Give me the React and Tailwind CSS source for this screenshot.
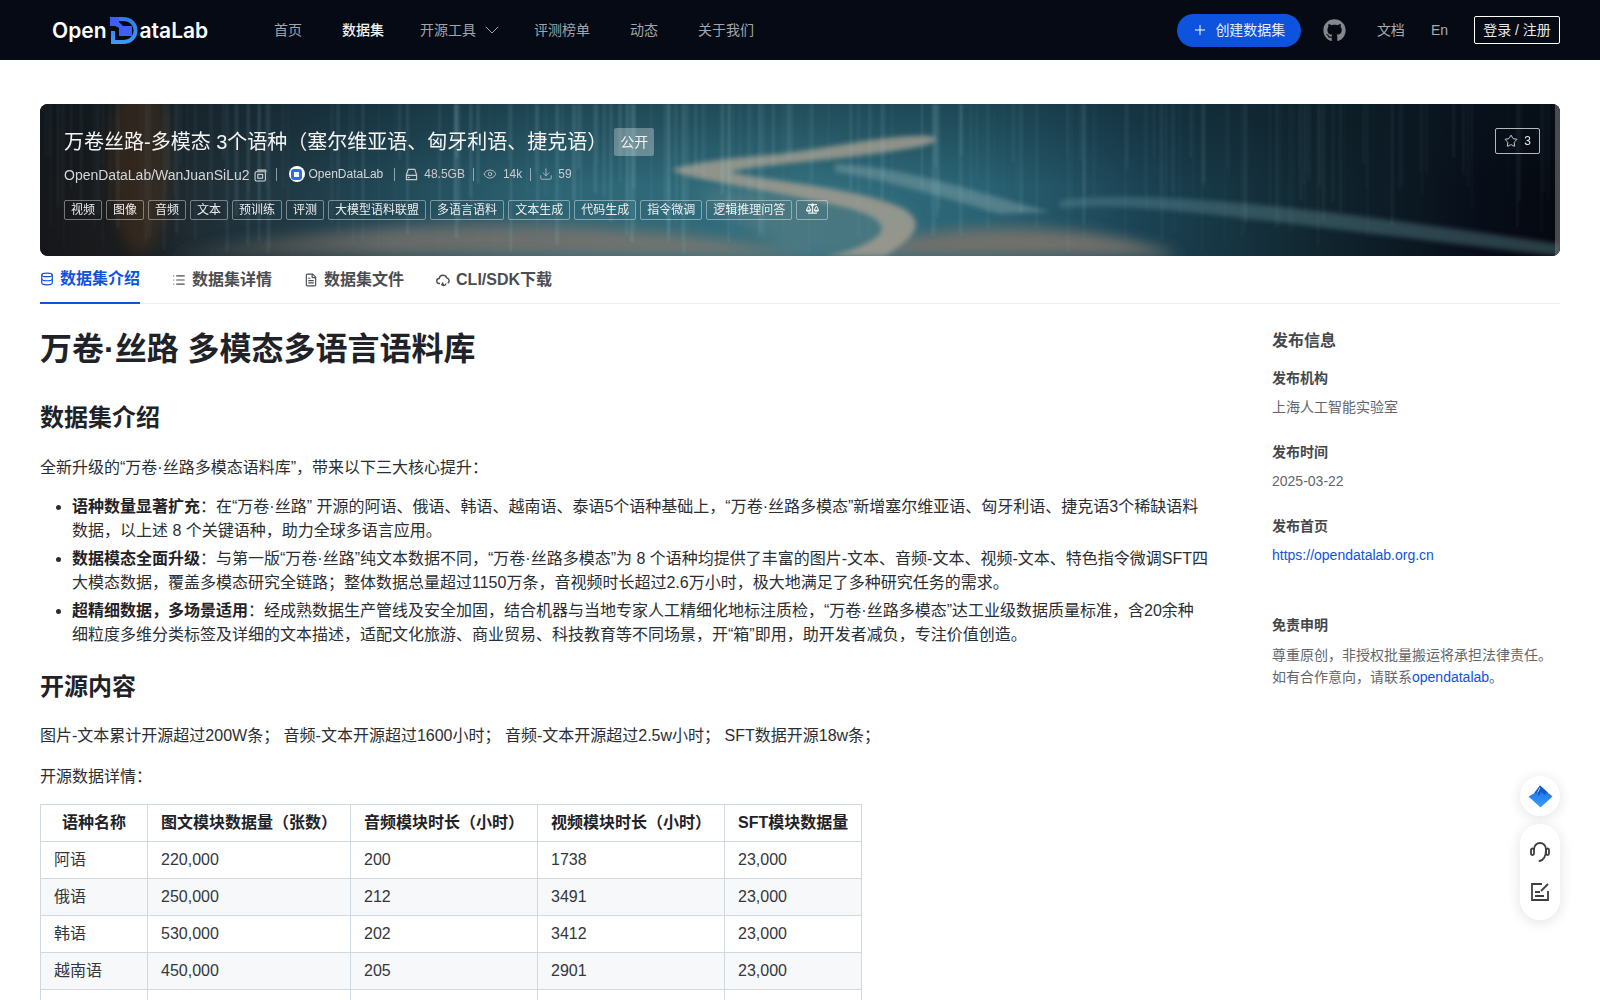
import React from "react";
import { ChevronDown, Plus, Star, Eye, Download, Database, List, FileText } from "lucide-react";
import { FaGithub, FaBalanceScale } from "react-icons/fa";

const FONT = "font-['Liberation_Sans','Noto_Sans_CJK_SC',sans-serif]";

function rand(seed) {
  const x = Math.sin(seed * 127.1) * 43758.5453;
  return x - Math.floor(x);
}

const stripes = Array.from({ length: 240 }, (_, i) => {
  const x = rand(i + 1) * 1520;
  const h = 50 + rand(i + 50) * 100;
  const w = 0.8 + rand(i + 90) * 3;
  const center = Math.exp(-Math.pow((x - 520) / 380, 2));
  const o = 0.03 + rand(i + 130) * 0.09 * (0.35 + center);
  return { x, h, w, o };
});

function BannerArt() {
  return (
    <svg className="absolute inset-0 w-full h-full" viewBox="0 0 1520 152" preserveAspectRatio="none" aria-hidden="true">
      <defs>
        <linearGradient id="base" x1="0" x2="1" y1="0" y2="0">
          <stop offset="0" stopColor="#15171a" />
          <stop offset="0.06" stopColor="#1b1d1f" />
          <stop offset="0.1" stopColor="#1f2c33" />
          <stop offset="0.22" stopColor="#214654" />
          <stop offset="0.34" stopColor="#2d6575" />
          <stop offset="0.5" stopColor="#33707f" />
          <stop offset="0.62" stopColor="#2a6374" />
          <stop offset="0.72" stopColor="#1c4455" />
          <stop offset="0.84" stopColor="#11262f" />
          <stop offset="0.95" stopColor="#070d18" />
          <stop offset="1" stopColor="#05080f" />
        </linearGradient>
        <linearGradient id="fadeUp" x1="0" x2="0" y1="0" y2="1">
          <stop offset="0" stopColor="#0a1720" stopOpacity="0.4" />
          <stop offset="0.55" stopColor="#0a1720" stopOpacity="0" />
        </linearGradient>
        <linearGradient id="mound" x1="0" x2="1" y1="0" y2="0">
          <stop offset="0" stopColor="#2f3537" />
          <stop offset="0.35" stopColor="#666b69" />
          <stop offset="1" stopColor="#787a76" />
        </linearGradient>
        <filter id="b1"><feGaussianBlur stdDeviation="0.8" /></filter>
        <filter id="b3"><feGaussianBlur stdDeviation="2.500" /></filter>
        <filter id="b6"><feGaussianBlur stdDeviation="7" /></filter>
      </defs>
      <rect width="1520" height="152" fill="url(#base)" />
      <rect width="1520" height="152" fill="url(#fadeUp)" />
      <ellipse cx="100" cy="60" rx="30" ry="90" fill="#54371f" opacity="0.4" filter="url(#b6)" />
      <g filter="url(#b6)">
        <path d="M130 152 C 250 124 430 114 560 124 C 660 130 735 144 770 152 Z" fill="url(#mound)" />
        <path d="M815 152 C 850 128 960 118 1040 128 C 1090 134 1120 144 1140 152 Z" fill="#72716c" />
        <path d="M660 90 C 740 80 840 90 870 110 C 880 130 860 150 850 152 L 760 152 C 720 130 680 110 660 90 Z" fill="#5d7f85" opacity="0.55" />
      </g>
      <g filter="url(#b3)">
        <path d="M890 32 C 850 30 790 44 740 50 C 695 54 650 58 632 66 C 650 76 720 84 790 100 C 830 108 850 118 838 132 C 820 146 795 150 785 152 L 845 152 C 870 136 890 120 862 104 C 820 84 720 76 690 68 C 720 60 800 56 860 46 C 890 42 905 36 890 32 Z" fill="#a09c8f" opacity="0.85" />
        <path d="M795 60 C 860 62 930 86 1010 108 L 960 110 C 900 92 840 74 795 68 Z" fill="#7fa0a6" opacity="0.5" />
        <path d="M1020 104 C 1100 96 1240 120 1520 152 L 1520 140 C 1300 108 1120 84 1020 96 Z" fill="#5f8b93" opacity="0.4" />
      </g>
      <g filter="url(#b1)">
        {stripes.map((s, i) => (
          <rect key={i} x={s.x} y={0} width={s.w} height={s.h} fill="#a8d4de" opacity={s.o} />
        ))}
      </g>
      <rect x="1515" width="5" height="152" fill="#777777" opacity="0.6" />
    </svg>
  );
}

function Logo() {
  return (
    <div className="flex items-center text-white font-['Inter',sans-serif] font-semibold text-[21px] leading-none w-[156px] ml-[52px]">
      <span>Open</span>
      <svg width="28" height="27" viewBox="0 0 28 27" className="ml-[3px] mr-[2px] shrink-0">
        <defs>
          <linearGradient id="logoG" x1="0" x2="0" y1="0" y2="1">
            <stop offset="0" stopColor="#2f7bf0" />
            <stop offset="1" stopColor="#3a9cf5" />
          </linearGradient>
        </defs>
        <path d="M9 0h4c9 0 14.500 6 14.500 13.500S22 27 13 27H1V14h4v9h8c6.500 0 10.500-4 10.500-9.500S19.500 4 13 4H9z" fill="url(#logoG)" />
        <path d="M0 0h9v5l4 4h9v10H9v-8L5 9H0z" fill="#3d5ff5" />
      </svg>
      <span>ataLab</span>
    </div>
  );
}

function Header() {
  const item = "text-[14px] text-[#a3a5a9]";
  return (
    <header className="h-[60px] bg-[#050a14] flex items-center shrink-0">
      <Logo />
      <nav className="flex items-center ml-[66px]">
        <span className={item}>首页</span>
        <span className="text-[14px] text-[#f2f2f2] font-medium ml-[40px]">数据集</span>
        <span className={`${item} ml-[36px]`}>开源工具</span>
        <ChevronDown size={24} strokeWidth={1} className="text-[#a3a5a9] ml-[4px]" />
        <span className={`${item} ml-[30px]`}>评测榜单</span>
        <span className={`${item} ml-[40px]`}>动态</span>
        <span className={`${item} ml-[40px]`}>关于我们</span>
      </nav>
      <div className="flex items-center ml-auto mr-[40px]">
        <button className="h-[33px] w-[124px] rounded-full bg-[#0d53de] text-[#e8eefc] text-[14px] flex items-center justify-center gap-[7px]">
          <Plus size={16} strokeWidth={1.5} className="text-white" />
          创建数据集
        </button>
        <FaGithub size={23} className="text-[#85878b] ml-[22px]" />
        <span className="text-[14px] text-[#a9abae] ml-[31px]">文档</span>
        <span className="text-[14px] text-[#a9abae] ml-[26px]">En</span>
        <button className="ml-[26px] h-[28px] w-[86px] border border-white rounded-[2px] text-[14px] text-[#e8e8e8]">登录 / 注册</button>
      </div>
    </header>
  );
}

const TAGS = ["视频", "图像", "音频", "文本", "预训练", "评测", "大模型语料联盟", "多语言语料", "文本生成", "代码生成", "指令微调", "逻辑推理问答"];

function Divider({ className }) {
  return <span className={`block w-px h-[13px] bg-white/50 ${className}`} />;
}

function Banner() {
  return (
    <section className="relative mt-[44px] mx-[40px] h-[152px] rounded-[8px] overflow-hidden bg-[#15171a] shrink-0">
      <BannerArt />
      <div className="relative pl-[24px] pr-[20px] pt-[24px] text-white">
        <div className="flex items-start h-[28px]">
          <h2 className="text-[20px] leading-[28px] text-[#f4f4f4]">万卷丝路-多模态 3个语种（塞尔维亚语、匈牙利语、捷克语）</h2>
          <span className="ml-[7px] h-[28px] w-[40px] rounded-[2px] bg-white/30 text-[14px] text-[#f2f2f2] flex items-center justify-center">公开</span>
          <button className="ml-auto h-[26px] w-[45px] border border-white/70 rounded-[2px] text-[12px] text-[#e8e8e8] flex items-center justify-center gap-[6px]">
            <Star size={14} strokeWidth={1.5} />3
          </button>
        </div>
        <div className="flex items-center mt-[9px] h-[20px]">
          <span className="text-[14px] text-[#d4d6d8]">OpenDataLab/WanJuanSiLu2</span>
          <svg width="13" height="13" viewBox="0 0 12 12" fill="none" stroke="#d4d6d8" strokeWidth="1" className="ml-[4px]">
            <rect x="1" y="2.500" width="9.500" height="8.500" rx="1" />
            <path d="M3 1h7.500A.5.5 0 0 1 11 1.500V3" />
            <rect x="3.500" y="5" width="4.500" height="3.500" />
          </svg>
          <Divider className="ml-[9px] -mt-[2px]" />
          <span className="ml-[12px] -mt-[2px] w-[16px] h-[16px] rounded-full bg-white flex items-center justify-center">
            <span className="w-[11px] h-[11px] rounded-[3px] bg-[#2f6bf2] flex items-center justify-center">
              <span className="w-[5px] h-[5px] bg-white" />
            </span>
          </span>
          <span className="ml-[4px] -mt-[2px] text-[12px] text-[#d4d6d8]">OpenDataLab</span>
          <Divider className="ml-[11px] -mt-[2px]" />
          <svg width="13" height="13" viewBox="0 0 14 14" fill="none" stroke="#c9cbce" strokeWidth="1.200" className="ml-[10px] -mt-[2px]">
            <path d="M3.500 1.500h7l2 6v5h-11v-5z" />
            <path d="M1.500 8h11M3 10.300h2" />
          </svg>
          <span className="ml-[6px] -mt-[2px] text-[12px] text-[#c9cbce]">48.5GB</span>
          <Divider className="ml-[8px] -mt-[2px]" />
          <Eye size={14} strokeWidth={1.400} className="text-[#c9cbce] ml-[9px] -mt-[2px]" />
          <span className="ml-[6px] -mt-[2px] text-[12px] text-[#c9cbce]">14k</span>
          <Divider className="ml-[8px] -mt-[2px]" />
          <Download size={14} strokeWidth={1.300} className="text-[#c9cbce] ml-[8px] -mt-[2px]" />
          <span className="ml-[5px] -mt-[2px] text-[12px] text-[#c9cbce]">59</span>
        </div>
        <div className="flex items-center gap-[4px] mt-[15px]">
          {TAGS.map((t) => (
            <span key={t} className="h-[20px] px-[6px] border border-white/40 rounded-[2px] text-[12px] leading-[18px] text-[#eeeeee]">{t}</span>
          ))}
          <span className="h-[20px] w-[32px] border border-white/40 rounded-[2px] flex justify-center pt-[1px] text-[#eeeeee]">
            <FaBalanceScale size={13} />
          </span>
        </div>
      </div>
    </section>
  );
}

function Tabs() {
  const off = "flex items-center gap-[6px] h-[48px] text-[#4a4d52]";
  return (
    <div className="mx-[40px] h-[48px] border-b border-[#eeeeee] flex gap-[32px] text-[16px] font-bold shrink-0">
      <div className="flex items-center gap-[6px] h-[48px] text-[#0d53de] border-b-2 border-[#0d53de]">
        <Database size={14} strokeWidth={2} />数据集介绍
      </div>
      <div className={off}><List size={14} strokeWidth={2} />数据集详情</div>
      <div className={off}><FileText size={14} strokeWidth={2} />数据集文件</div>
      <div className={`${off} gap-[5px]`}>
        <svg width="14" height="14" viewBox="0 0 14 14" fill="none" stroke="#4a4d52" strokeWidth="1.400">
          <path d="M4 10.500H3.500a2.500 2.500 0 0 1-.4-5A4 4 0 0 1 10.800 5a2.800 2.800 0 0 1 .9 5.200" />
          <path d="M6 11.500a2.200 2.200 0 0 0 4-1" />
          <path d="M7 9.500l-1 2h2" />
        </svg>
        CLI/SDK下载
      </div>
    </div>
  );
}

const ROWS = [
  ["阿语", "220,000", "200", "1738", "23,000"],
  ["俄语", "250,000", "212", "3491", "23,000"],
  ["韩语", "530,000", "202", "3412", "23,000"],
  ["越南语", "450,000", "205", "2901", "23,000"],
  ["\u00a0", "", "", "", ""],
];

function DataTable() {
  const th = "border border-[#d1d9e0] px-[13px] h-[37px] font-bold text-[#1f2328] whitespace-nowrap";
  const td = "border border-[#d1d9e0] px-[13px] h-[37px] text-[#33373d]";
  return (
    <table className="mt-[15px] border-collapse text-[16px] leading-[24px] w-[821px] table-fixed">
      <colgroup>
        <col className="w-[107px]" />
        <col className="w-[203px]" />
        <col className="w-[187px]" />
        <col className="w-[187px]" />
        <col className="w-[137px]" />
      </colgroup>
      <thead>
        <tr>
          <th className={`${th} text-center`}>语种名称</th>
          <th className={`${th} text-left`}>图文模块数据量（张数）</th>
          <th className={`${th} text-left`}>音频模块时长（小时）</th>
          <th className={`${th} text-left`}>视频模块时长（小时）</th>
          <th className={`${th} text-left`}>SFT模块数据量</th>
        </tr>
      </thead>
      <tbody>
        {ROWS.map((r, i) => (
          <tr key={i} className={i % 2 === 1 ? "bg-[#f6f8fa]" : "bg-white"}>
            {r.map((c, j) => (
              <td key={j} className={td}>{c}</td>
            ))}
          </tr>
        ))}
      </tbody>
    </table>
  );
}

function Article() {
  const li = "leading-[24px]";
  return (
    <article className="w-[1168px] shrink-0 text-[16px] leading-[24px] text-[#2a2e33]">
      <h1 className="mt-[25px] text-[32px] leading-[40px] font-bold text-[#1f2328]">万卷·丝路 多模态多语言语料库</h1>
      <h2 className="mt-[33px] text-[24px] leading-[32px] font-bold text-[#1f2328]">数据集介绍</h2>
      <p className="mt-[22px]">全新升级的“万卷·丝路多模态语料库”，带来以下三大核心提升：</p>
      <ul className="mt-[15px] pl-[32px] list-disc flex flex-col gap-[4px]">
        <li className={li}><strong className="font-bold text-[#1f2328]">语种数量显著扩充</strong>：在“万卷·丝路” 开源的阿语、俄语、韩语、越南语、泰语5个语种基础上，“万卷·丝路多模态”新增塞尔维亚语、匈牙利语、捷克语3个稀缺语料数据，以上述 8 个关键语种，助力全球多语言应用。</li>
        <li className={li}><strong className="font-bold text-[#1f2328]">数据模态全面升级</strong>：与第一版“万卷·丝路”纯文本数据不同，“万卷·丝路多模态”为 8 个语种均提供了丰富的图片-文本、音频-文本、视频-文本、特色指令微调SFT四大模态数据，覆盖多模态研究全链路；整体数据总量超过1150万条，音视频时长超过2.6万小时，极大地满足了多种研究任务的需求。</li>
        <li className={li}><strong className="font-bold text-[#1f2328]">超精细数据，多场景适用</strong>：经成熟数据生产管线及安全加固，结合机器与当地专家人工精细化地标注质检，“万卷·丝路多模态”达工业级数据质量标准，含20余种细粒度多维分类标签及详细的文本描述，适配文化旅游、商业贸易、科技教育等不同场景，开“箱”即用，助开发者减负，专注价值创造。</li>
      </ul>
      <h2 className="mt-[24px] text-[24px] leading-[32px] font-bold text-[#1f2328]">开源内容</h2>
      <p className="mt-[21px]">图片-文本累计开源超过200W条； 音频-文本开源超过1600小时； 音频-文本开源超过2.5w小时； SFT数据开源18w条；</p>
      <p className="mt-[17px]">开源数据详情：</p>
      <DataTable />
    </article>
  );
}

function Sidebar() {
  const label = "text-[14px] leading-[20px] font-bold text-[#45484d]";
  const value = "mt-[9px] text-[14px] leading-[20px]";
  return (
    <aside className="ml-[64px] w-[288px] shrink-0 pt-[25px]">
      <h3 className="text-[16px] leading-[24px] font-bold text-[#45484d]">发布信息</h3>
      <div className={`${label} mt-[15px]`}>发布机构</div>
      <div className={`${value} text-[#63666b]`}>上海人工智能实验室</div>
      <div className={`${label} mt-[25px]`}>发布时间</div>
      <div className={`${value} text-[#63666b]`}>2025-03-22</div>
      <div className={`${label} mt-[25px]`}>发布首页</div>
      <div className={`${value} text-[#0d53de]`}>https://opendatalab.org.cn</div>
      <div className={`${label} mt-[50px]`}>免责申明</div>
      <p className="mt-[9px] text-[14px] leading-[22px] text-[#63666b]">
        尊重原创，非授权批量搬运将承担法律责任。<br />如有合作意向，请联系<span className="text-[#0d53de]">opendatalab</span>。
      </p>
    </aside>
  );
}

function FloatingTools() {
  return (
    <div className="fixed left-[1520px] top-[776px] w-[40px] flex flex-col gap-[8px]">
      <div className="w-[40px] h-[40px] rounded-full bg-white shadow-[0_2px_14px_rgba(0,0,0,0.12)] flex items-center justify-center">
        <svg width="25" height="23" viewBox="0 0 25 23">
          <defs>
            <linearGradient id="mtn" x1="0" x2="0" y1="0" y2="1">
              <stop offset="0" stopColor="#1668e0" />
              <stop offset="1" stopColor="#3a9dfb" />
            </linearGradient>
          </defs>
          <path d="M12 0.500 L24.500 11.500 L12.500 22.500 L0.500 11.500 L6 8.500 Z" fill="url(#mtn)" />
          <path d="M12 0.500 L6 8.500 L9.500 7.500 L11 11 L13 6.500 L17 10 L19 7 Z" fill="#1259cc" />
          <path d="M15 2.500 C 18 3 20 5.500 21 8.500" stroke="#ffffff" strokeWidth="0.700" fill="none" />
          <path d="M12 2.500 L9.500 7.500" stroke="#ffffff" strokeWidth="0.700" fill="none" />
        </svg>
      </div>
      <div className="w-[40px] h-[96px] rounded-full bg-white shadow-[0_2px_14px_rgba(0,0,0,0.12)] flex flex-col items-center justify-between pt-[18px] pb-[19px]">
        <svg width="20" height="20" viewBox="0 0 20 20" fill="none" stroke="#3d3f44" strokeWidth="1.800" strokeLinecap="round">
          <path d="M4 7.500C4 3.500 6.800 1 10 1s6 2.500 6 6.500c0 6-1.500 10.500-6.500 11.500" />
          <rect x="1" y="6.500" width="3" height="6.500" rx="1.500" />
          <rect x="16" y="6.500" width="3" height="6.500" rx="1.500" />
        </svg>
        <svg width="18" height="18" viewBox="0 0 18 18" fill="none" stroke="#3d3f44" strokeWidth="1.800">
          <path d="M11 1H1v16h16V8" />
          <path d="M10 8l7-7" />
          <path d="M4 9h5M4 13h9" />
        </svg>
      </div>
    </div>
  );
}

export default function App() {
  return (
    <div className={`${FONT} h-[1000px] overflow-hidden bg-white flex flex-col`}>
      <Header />
      <Banner />
      <Tabs />
      <main className="flex px-[40px]">
        <Article />
        <Sidebar />
      </main>
      <FloatingTools />
    </div>
  );
}
